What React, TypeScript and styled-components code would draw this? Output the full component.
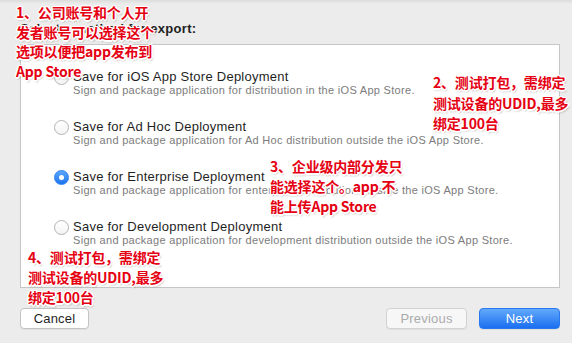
import { FC } from "react";
import styled, { createGlobalStyle } from "styled-components";

const GlobalStyle = createGlobalStyle`
  html, body {
    margin: 0;
    padding: 0;
    background: #ececec;
  }
  body {
    font-family: "Liberation Sans", Arial, sans-serif;
    -webkit-font-smoothing: antialiased;
  }
`;

type Option = { title: string; desc: string; checked?: boolean };

const OPTIONS: Option[] = [
  {
    title: "Save for iOS App Store Deployment",
    desc: "Sign and package application for distribution in the iOS App Store.",
  },
  {
    title: "Save for Ad Hoc Deployment",
    desc: "Sign and package application for Ad Hoc distribution outside the iOS App Store.",
  },
  {
    title: "Save for Enterprise Deployment",
    desc: "Sign and package application for enterprise distribution outside the iOS App Store.",
    checked: true,
  },
  {
    title: "Save for Development Deployment",
    desc: "Sign and package application for development distribution outside the iOS App Store.",
  },
];

type Note = { x: number; y: number; lh: number; lines: string[] };

const NOTES: Note[] = [
  {
    x: 16,
    y: 3,
    lh: 19.5,
    lines: ["1、公司账号和个人开", "发者账号可以选择这个", "选项以便把app发布到", "App Store"],
  },
  { x: 433, y: 72, lh: 20.5, lines: ["2、测试打包，需绑定", "测试设备的UDID,最多", "绑定100台"] },
  { x: 270, y: 156, lh: 20, lines: ["3、企业级内部分发只", "能选择这个。app 不", "能上传App Store"] },
  { x: 28, y: 247, lh: 20, lines: ["4、测试打包，需绑定", "测试设备的UDID,最多", "绑定100台"] },
];

const App: FC = () => {
  return (
    <>
      <GlobalStyle />
      <SWindow>
        <SHeading>Select a method for export:</SHeading>
        <SPanel>
          {OPTIONS.map((o) => (
            <SOption key={o.title}>
              <SRadio $checked={!!o.checked} />
              <SOptionText>
                <SOptionTitle>{o.title}</SOptionTitle>
                <SOptionDesc>{o.desc}</SOptionDesc>
              </SOptionText>
            </SOption>
          ))}
        </SPanel>
        <SFooter>
          <SButton>Cancel</SButton>
          <SRightButtons>
            <SButton $wide disabled>
              Previous
            </SButton>
            <SButton $wide $primary>
              Next
            </SButton>
          </SRightButtons>
        </SFooter>
        {NOTES.map((n) => (
          <SNote key={n.lines[0]} style={{ left: n.x, top: n.y, lineHeight: `${n.lh}px` }}>
            {n.lines.map((l) => (
              <div key={l}>{l}</div>
            ))}
          </SNote>
        ))}
      </SWindow>
    </>
  );
};

export default App;

const SWindow = styled.div`
  position: relative;
  width: 572px;
  height: 343px;
  box-sizing: border-box;
  padding: 21px 12px 0 20px;
  background: linear-gradient(to bottom, #dcdcdc 0px, #ececec 4px, #ececec 100%);
  overflow: hidden;
`;

const SHeading = styled.div`
  font-size: 13px;
  font-weight: bold;
  line-height: 16px;
  letter-spacing: 0.3px;
  color: #1e1e1e;
  margin-bottom: 7px;
`;

const SPanel = styled.div`
  height: 244px;
  box-sizing: border-box;
  background: #fff;
  border: 1px solid #c6c6c6;
  padding: 25px 0 0 33px;
  display: flex;
  flex-direction: column;
  gap: 24px;
`;

const SOption = styled.div`
  display: flex;
  align-items: flex-start;
  gap: 4px;
`;

const SRadio = styled.span<{ $checked: boolean }>`
  position: relative;
  width: 15px;
  height: 15px;
  box-sizing: border-box;
  border-radius: 50%;
  flex-shrink: 0;
  border: 1px solid ${(p) => (p.$checked ? "#2f7ff0" : "#b4b4b4")};
  background: ${(p) =>
    p.$checked ? "linear-gradient(to bottom, #5aa6fb, #1f74ef)" : "linear-gradient(to bottom, #ffffff, #f4f4f4)"};
  &::after {
    content: "";
    display: ${(p) => (p.$checked ? "block" : "none")};
    position: absolute;
    left: 4px;
    top: 4px;
    width: 5px;
    height: 5px;
    border-radius: 50%;
    background: #fff;
  }
`;

const SOptionText = styled.div`
  display: flex;
  flex-direction: column;
`;

const SOptionTitle = styled.div`
  font-size: 13px;
  line-height: 14px;
  letter-spacing: 0.25px;
  color: #1f1f1f;
`;

const SOptionDesc = styled.div`
  font-size: 11px;
  line-height: 12px;
  letter-spacing: 0.3px;
  color: #7c7c7c;
  white-space: nowrap;
`;

const SFooter = styled.div`
  display: flex;
  justify-content: space-between;
  margin-top: 20px;
`;

const SRightButtons = styled.div`
  display: flex;
  gap: 12px;
`;

const SButton = styled.button<{ $wide?: boolean; $primary?: boolean }>`
  width: ${(p) => (p.$wide ? "81px" : "69px")};
  height: 21px;
  padding: 0;
  font-family: "Liberation Sans", Arial, sans-serif;
  font-size: 13px;
  letter-spacing: 0.2px;
  border-radius: 4px;
  box-sizing: border-box;
  color: #1f1f1f;
  background: #fff;
  border: 1px solid #c4c4c4;
  box-shadow: 0 1px 0 rgba(0, 0, 0, 0.05);
  &:disabled {
    color: #ababab;
    background: #f7f7f7;
    border-color: #d2d2d2;
  }
  ${(p) =>
    p.$primary &&
    `
    color: #fff;
    border-color: #2a78ef;
    background: linear-gradient(to bottom, #62a9fb, #1b6ff0);
  `}
`;

const SNote = styled.div`
  position: absolute;
  font-family: "Noto Sans CJK SC", "Liberation Sans", sans-serif;
  font-weight: 700;
  font-size: 14px;
  color: #e50012;
  white-space: nowrap;
  letter-spacing: -0.2px;
  text-shadow: -1px -1px 0 #fff, 1px -1px 0 #fff, -1px 1px 0 #fff, 1px 1px 0 #fff, 0 1.5px 0 #fff,
    0 -1.5px 0 #fff, 1.5px 0 0 #fff, -1.5px 0 0 #fff, 1px 2px 2px rgba(0, 0, 0, 0.35);
`;
